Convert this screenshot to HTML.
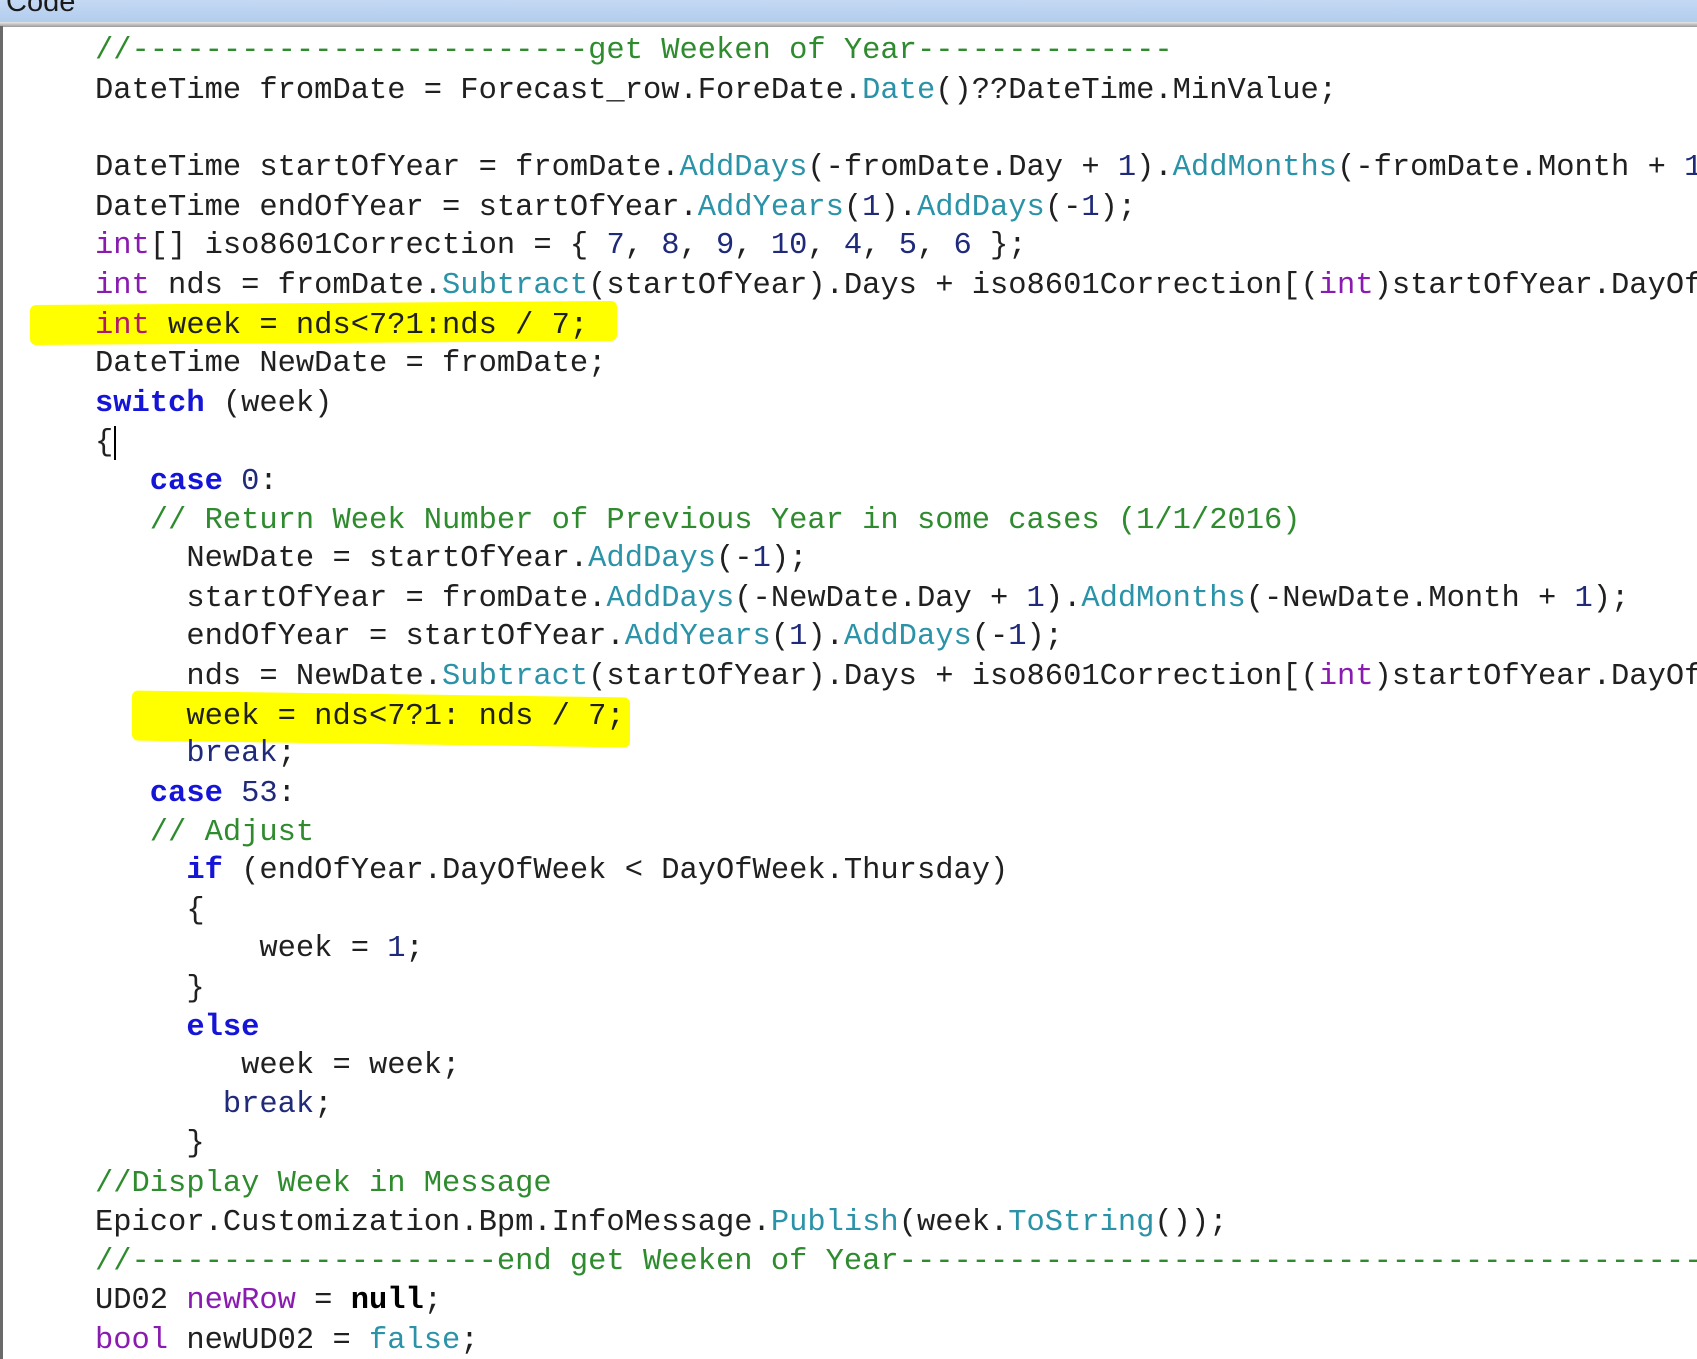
<!DOCTYPE html>
<html><head><meta charset="utf-8"><style>
html,body{margin:0;padding:0;width:1697px;height:1359px;overflow:hidden;background:#fff;}
#w{position:relative;width:1697px;height:1359px;overflow:hidden;}
.bar{position:absolute;left:0;top:0;width:1697px;height:22px;background:linear-gradient(#c4d9f3,#b3cdee);}
.bar span{position:absolute;left:6px;top:-14px;font:29px "Liberation Sans",sans-serif;color:#1a1a1a;}
.bline{position:absolute;left:0;top:22px;width:1697px;height:5px;background:linear-gradient(#e8e8e8,#9a9a9a);}
.lb{position:absolute;left:0;top:26px;width:3px;height:1333px;background:#6a6a6a;}
.hl{position:absolute;background:#ffff00;border-radius:6px;}
.l{position:absolute;left:95px;white-space:pre;font-family:"Liberation Mono",monospace;font-size:30.45px;line-height:39px;color:#202020;}
.c{color:#2e8b2e}.k{color:#1515d8;font-weight:bold}.t{color:#8a1bb0}.m{color:#2b93a8}.n{color:#1f2a7a}.b{font-weight:bold;color:#000}
</style></head><body><div id="w">
<div class="bar"><span>Code</span></div>
<div class="bline"></div>
<div class="lb"></div>
<div class="hl" style="left:30px;top:303px;width:587px;height:40px;transform:skewY(-0.4deg)"></div>
<div class="hl" style="left:132px;top:694px;width:498px;height:50px;transform:skewY(0.8deg)"></div>
<div class="l" style="top:32px"><span class="c">//-------------------------get Weeken of Year--------------</span></div>
<div class="l" style="top:72px">DateTime fromDate = Forecast_row.ForeDate.<span class="m">Date</span>()??DateTime.MinValue;</div>
<div class="l" style="top:149px">DateTime startOfYear = fromDate.<span class="m">AddDays</span>(-fromDate.Day + <span class="n">1</span>).<span class="m">AddMonths</span>(-fromDate.Month + <span class="n">1</span>);</div>
<div class="l" style="top:189px">DateTime endOfYear = startOfYear.<span class="m">AddYears</span>(<span class="n">1</span>).<span class="m">AddDays</span>(-<span class="n">1</span>);</div>
<div class="l" style="top:227px"><span class="t">int</span>[] iso8601Correction = { <span class="n">7</span>, <span class="n">8</span>, <span class="n">9</span>, <span class="n">10</span>, <span class="n">4</span>, <span class="n">5</span>, <span class="n">6</span> };</div>
<div class="l" style="top:267px"><span class="t">int</span> nds = fromDate.<span class="m">Subtract</span>(startOfYear).Days + iso8601Correction[(<span class="t">int</span>)startOfYear.DayOfWeek];</div>
<div class="l" style="top:307px"><span class="t" style="color:#b0186a">int</span> week = nds&lt;7?1:nds / 7;</div>
<div class="l" style="top:345px">DateTime NewDate = fromDate;</div>
<div class="l" style="top:385px"><span class="k">switch</span> (week)</div>
<div class="l" style="top:424px">{<span style="border-left:2px solid #000;margin-left:1px"></span></div>
<div class="l" style="top:463px">   <span class="k">case</span> <span class="n">0</span>:</div>
<div class="l" style="top:502px">   <span class="c">// Return Week Number of Previous Year in some cases (1/1/2016)</span></div>
<div class="l" style="top:540px">     NewDate = startOfYear.<span class="m">AddDays</span>(-<span class="n">1</span>);</div>
<div class="l" style="top:580px">     startOfYear = fromDate.<span class="m">AddDays</span>(-NewDate.Day + <span class="n">1</span>).<span class="m">AddMonths</span>(-NewDate.Month + <span class="n">1</span>);</div>
<div class="l" style="top:618px">     endOfYear = startOfYear.<span class="m">AddYears</span>(<span class="n">1</span>).<span class="m">AddDays</span>(-<span class="n">1</span>);</div>
<div class="l" style="top:658px">     nds = NewDate.<span class="m">Subtract</span>(startOfYear).Days + iso8601Correction[(<span class="t">int</span>)startOfYear.DayOfWeek];</div>
<div class="l" style="top:698px">     week = nds&lt;7?1: nds / 7;</div>
<div class="l" style="top:735px">     <span class="n">break</span>;</div>
<div class="l" style="top:775px">   <span class="k">case</span> <span class="n">53</span>:</div>
<div class="l" style="top:814px">   <span class="c">// Adjust</span></div>
<div class="l" style="top:852px">     <span class="k">if</span> (endOfYear.DayOfWeek &lt; DayOfWeek.Thursday)</div>
<div class="l" style="top:892px">     {</div>
<div class="l" style="top:930px">         week = <span class="n">1</span>;</div>
<div class="l" style="top:970px">     }</div>
<div class="l" style="top:1009px">     <span class="k">else</span></div>
<div class="l" style="top:1047px">        week = week;</div>
<div class="l" style="top:1086px">       <span class="n">break</span>;</div>
<div class="l" style="top:1125px">     }</div>
<div class="l" style="top:1165px"><span class="c">//Display Week in Message</span></div>
<div class="l" style="top:1204px">Epicor.Customization.Bpm.InfoMessage.<span class="m">Publish</span>(week.<span class="m">ToString</span>());</div>
<div class="l" style="top:1243px"><span class="c">//--------------------end get Weeken of Year----------------------------------------------</span></div>
<div class="l" style="top:1282px">UD02 <span class="t">newRow</span> = <span class="b">null</span>;</div>
<div class="l" style="top:1322px"><span class="t">bool</span> newUD02 = <span class="m">false</span>;</div>
</div></body></html>
